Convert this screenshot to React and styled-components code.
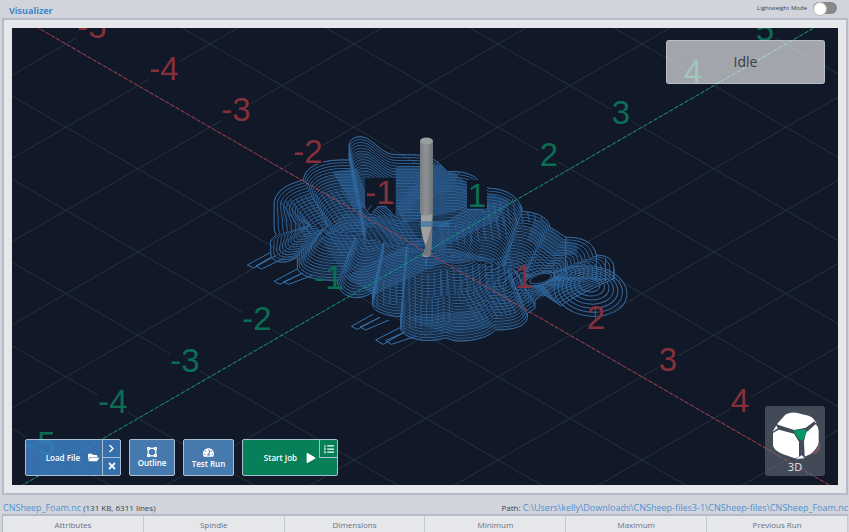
import React from "react";
import styled, { createGlobalStyle } from "styled-components";
import {
  FaFolderOpen,
  FaChevronRight,
  FaTimes,
  FaVectorSquare,
  FaTachometerAlt,
  FaPlay,
  FaListOl,
} from "react-icons/fa";

const GlobalStyle = createGlobalStyle`
  * { box-sizing: border-box; }
  body { margin: 0; background: #d1d5db; font-family: "Open Sans", "Noto Sans", sans-serif; }
  button { font-family: inherit; cursor: pointer; }
`;

const Page = styled.main`
  display: flex;
  flex-direction: column;
  height: 100vh;
  min-height: 400px;
  overflow: hidden;
  background: #d1d5db;
  color: #374151;
`;

const Header = styled.header`
  display: flex;
  align-items: center;
  justify-content: space-between;
  height: 18px;
  flex: none;
  padding: 0 12px 0 9px;
`;

const Title = styled.h1`
  margin: 0;
  padding-top: 4px;
  font-size: 9px;
  line-height: 14px;
  font-weight: 700;
  color: #4287c8;
`;

const ToggleLabel = styled.label`
  display: flex;
  align-items: center;
  gap: 6px;
  font-size: 6px;
  line-height: 12px;
  padding-bottom: 2px;
  color: #374151;
  cursor: pointer;
`;

const Toggle = styled.input`
  appearance: none;
  margin: 0;
  display: flex;
  width: 24px;
  height: 12px;
  border-radius: 6px;
  background: #888888;
  &::before {
    content: "";
    width: 12px;
    height: 12px;
    border-radius: 50%;
    background: #ffffff;
    border: 1px solid #bbbbbb;
  }
  &:checked { justify-content: flex-end; background: #3e85c7; }
`;

const Panel = styled.section`
  display: flex;
  flex: 1;
  min-height: 0;
  margin: 0 1px 0 2px;
  padding: 8px;
  border: 2px solid #b4bac6;
  background: #e5e7eb;
`;

const Viewport = styled.div`
  position: relative;
  flex: 1;
  min-width: 0;
  overflow: hidden;
  background: #111827;
`;

const Scene = styled.svg`
  display: block;
  width: 100%;
  height: 100%;
`;

const Status = styled.div`
  position: absolute;
  top: 12px;
  right: 13px;
  display: flex;
  align-items: center;
  justify-content: center;
  width: 159px;
  height: 44px;
  border: 1px solid rgba(209, 213, 219, 0.5);
  border-radius: 3px;
  background: rgba(255, 255, 255, 0.61);
  font-size: 14px;
  line-height: 18px;
  color: #3a3c44;
`;

const Toolbar = styled.div`
  position: absolute;
  left: 13px;
  bottom: 9px;
  display: flex;
  gap: 8px;
`;

const ButtonGroup = styled.div`
  display: flex;
  width: 96px;
  height: 37px;
  border: 1px solid #a9bdd3;
  border-radius: 2px;
  overflow: hidden;
  background: ${(p) => (p.$tone === "green" ? "#077f59" : "rgba(58, 124, 192, 0.88)")};
`;

const MainAction = styled.button`
  display: flex;
  flex: 1;
  align-items: center;
  justify-content: flex-end;
  gap: ${(p) => (p.$wide ? "9px" : "8px")};
  padding: 0 3px 0 0;
  border: 0;
  background: none;
  color: #ffffff;
  font-size: 8px;
  line-height: 12px;
  font-weight: 600;
  white-space: nowrap;
`;

const SideColumn = styled.div`
  display: flex;
  flex-direction: column;
  width: 18px;
`;

const SideButton = styled.button`
  display: flex;
  align-items: center;
  justify-content: center;
  width: 18px;
  height: 18px;
  padding: 0;
  border: 0 solid #a9bdd3;
  border-left-width: 1px;
  border-bottom-width: ${(p) => (p.$ruled ? "1px" : "0")};
  background: none;
  color: #ffffff;
  stroke-width: 30px;
`;

const StackButton = styled.button`
  display: flex;
  flex-direction: column;
  align-items: center;
  justify-content: center;
  width: ${(p) => (p.$wide ? "51px" : "46px")};
  height: 37px;
  padding: 0;
  border: 1px solid #a9bdd3;
  border-radius: 2px;
  background: rgba(80, 140, 200, 0.85);
  color: #ffffff;
  font-size: 8px;
  line-height: 11px;
  font-weight: 600;
`;

const ViewButton = styled.button`
  position: absolute;
  right: 13px;
  bottom: 9px;
  display: flex;
  flex-direction: column;
  align-items: center;
  width: 60px;
  height: 70px;
  padding: 6px 0 0;
  border: 0;
  border-radius: 3px;
  background: rgba(107, 114, 128, 0.55);
  color: #e5e7eb;
  font-size: 11px;
  line-height: 14px;
`;

const FileInfo = styled.div`
  display: flex;
  align-items: center;
  justify-content: space-between;
  flex: none;
  height: 19px;
  padding: 6px 1px 0 3px;
  font-size: 8px;
  line-height: 12px;
  white-space: nowrap;
  color: #374151;
`;

const FileLink = styled.a`
  font-size: 9px;
  color: #5090d2;
  text-decoration: none;
`;

const StatsClip = styled.div`
  flex: none;
  height: 18px;
  overflow: hidden;
  margin: 0 1px 0 2px;
  border-top: 2px solid #b4bac6;
  border-left: 1px solid #b4bac6;
`;

const Stats = styled.table`
  width: 100%;
  table-layout: fixed;
  border-collapse: separate;
  border-spacing: 0;
  background: #e5e7eb;
  th {
    height: 18px;
    padding: 0;
    border-right: 1px solid #c3c8d1;
    font-size: 8px;
    line-height: 16px;
    font-weight: 400;
    color: #6b7280;
  }
`;

const ORIGIN = { x: 426, y: 252 };
const STEP = { x: 72, y: 41.6 };
const SPAN = 16;
const gridSteps = Array.from({ length: 25 }, (_, i) => i - 12);

function GridLines() {
  return (
    <g stroke="#26333f" strokeWidth="1">
      {gridSteps.map((k) => {
        const dx = k * STEP.x;
        const dy = k * STEP.y;
        const w = SPAN * STEP.x;
        const h = SPAN * STEP.y;
        return (
          <React.Fragment key={k}>
            <line x1={ORIGIN.x + dx - w} y1={ORIGIN.y - dy - h} x2={ORIGIN.x + dx + w} y2={ORIGIN.y - dy + h} />
            <line x1={ORIGIN.x + dx - w} y1={ORIGIN.y + dy + h} x2={ORIGIN.x + dx + w} y2={ORIGIN.y + dy - h} />
          </React.Fragment>
        );
      })}
    </g>
  );
}

const marks = [-5, -4, -3, -2, -1, 1, 2, 3, 4, 5];

function AxisMarks() {
  const labels = marks.flatMap((n) => [
    { n, color: "#85303a", x: ORIGIN.x + n * STEP.x + 26, y: ORIGIN.y + n * STEP.y - 6 },
    {
      n,
      color: "#0c6d55",
      x: ORIGIN.x + n * STEP.x - (n < 0 ? 25 : 21),
      y: ORIGIN.y - n * STEP.y - (n < 0 ? 5 : 3),
    },
  ]);
  return (
    <g fontFamily="'Liberation Sans', Arial, sans-serif" fontSize="33" textAnchor="middle">
      {labels.map(({ n, color, x, y }) => (
        <g key={color + n}>
          {!((n === -1 && color === "#0c6d55") || (n > 0 && n < 3 && color === "#85303a")) && (
            <rect x={x - (n < 0 ? 15 : 10)} y={y - 26} width={n < 0 ? 30 : 20} height="27" fill="#111827" />
          )}
          <text x={x} y={y} fill={color}>{n}</text>
        </g>
      ))}
    </g>
  );
}

/* Outer boundary of the part, drawn at three units per scene unit. */
const OUTLINE =
  "M315 90 L315 45 C320 20 345 15 370 25 C400 45 415 65 440 72 C470 78 510 70 545 78 C580 90 590 105 610 125 C650 122 690 130 705 155 L735 175 C790 175 830 205 836 245 C880 245 915 265 918 292 C935 300 955 315 965 322 C1010 320 1050 335 1057 375 C1090 375 1110 390 1110 415 L1110 445 L985 505 L950 527 L905 497 C890 490 880 500 873 515 L873 535 L850 550 C855 580 830 600 755 600 C730 625 680 635 640 633 C620 632 610 622 600 625 C550 640 490 630 470 600 L470 560 C430 560 390 545 385 525 L385 487 C340 520 280 500 280 450 C230 455 165 440 160 415 L160 380 C120 410 80 395 80 370 L80 345 C75 335 85 325 97 315 C88 300 90 285 90 270 L90 215 C100 175 140 160 178 150 C180 120 215 85 315 90";

const range = (n) => Array.from({ length: n }, (_, i) => i);

function samplePath(d) {
  const tokens = d.match(/[MLC]|-?\d+/g);
  const points = [];
  let i = 0;
  let current = [0, 0];
  while (i < tokens.length) {
    const command = tokens[i++];
    if (command === "C") {
      const [a, b, c, e, x, y] = tokens.slice(i, i + 6).map(Number);
      i += 6;
      range(10).forEach((k) => {
        const t = (k + 1) / 10;
        const u = 1 - t;
        points.push([
          u ** 3 * current[0] + 3 * u * u * t * a + 3 * u * t * t * c + t ** 3 * x,
          u ** 3 * current[1] + 3 * u * u * t * b + 3 * u * t * t * e + t ** 3 * y,
        ]);
      });
      current = [x, y];
    } else {
      const next = [Number(tokens[i]), Number(tokens[i + 1])];
      i += 2;
      const pieces = command === "M" ? 1 : 5;
      const from = current;
      range(pieces).forEach((k) => {
        const t = (k + 1) / pieces;
        points.push([from[0] + (next[0] - from[0]) * t, from[1] + (next[1] - from[1]) * t]);
      });
      current = next;
    }
  }
  return points;
}

/* Every boundary point travels toward this ridge, so lobes keep their shape. */
const RIDGE_START = 200;
const RIDGE_END = 900;
const ridgeY = (x) => 285 + (x - RIDGE_START) * 0.22;
const boundary = samplePath(OUTLINE).map(([x, y]) => {
  const rx = Math.min(RIDGE_END, Math.max(RIDGE_START, 560 + (x - 560) * 0.8));
  const dx = rx - x;
  const dy = ridgeY(rx) - y;
  const length = Math.hypot(dx, dy * 1.5);
  return { x, y, ux: dx / length, uy: dy / length, length };
});

function insetPath(distance, shift) {
  let pen = "M";
  return boundary
    .map((p) => {
      if (distance > p.length) {
        pen = "M";
        return "";
      }
      const segment = `${pen}${(p.x + p.ux * distance).toFixed(1)} ${(p.y + p.uy * distance + shift).toFixed(1)}`;
      pen = "L";
      return segment;
    })
    .join("");
}

const levels = range(32).map((i) => i * 13);

/* Stepped walls show as hatching: x, y, width, height, spacing, slant. */
const HATCHES = [
  { x: 400, y: 455, w: 230, h: 75, gap: 19, slant: 0 },
  { x: 480, y: 520, w: 160, h: 80, gap: 17, slant: 0 },
  { x: 590, y: 285, w: 230, h: 65, gap: 21, slant: 10 },
  { x: 730, y: 220, w: 190, h: 75, gap: 19, slant: 12 },
  { x: 110, y: 215, w: 230, h: 110, gap: 15, slant: 80 },
  { x: 240, y: 290, w: 240, h: 90, gap: 15, slant: 60 },
  { x: 590, y: 420, w: 240, h: 80, gap: 19, slant: 6 },
  { x: 650, y: 480, w: 130, h: 95, gap: 14, slant: 55 },
  { x: 500, y: 170, w: 60, h: 90, gap: 11, slant: -50 },
  { x: 540, y: 110, w: 150, h: 110, gap: 11, slant: -60 },
];

const SLOTS = [
  "M80 367 L10 405 L28 414 L95 377",
  "M80 382 L36 408 L52 417 L120 385",
  "M160 417 L90 454 L108 463 L176 429",
  "M176 429 L118 456 L134 463 L205 436",
  "M388 552 L322 589 L340 598 L408 562",
  "M408 562 L348 591 L365 600 L435 570",
  "M470 592 L395 630 L417 643 L482 606",
  "M482 606 L425 632 L442 643 L512 620",
];

function Toolpath() {
  return (
    <g transform="translate(244 130) scale(0.33333)" fill="none" stroke="#32699f" strokeWidth="3">
      <clipPath id="partArea"><path d={OUTLINE} /></clipPath>
      <g stroke="#3672ad">
        {SLOTS.map((d) => <path key={d} d={d} />)}
      </g>
      <g clipPath="url(#partArea)" stroke="none" fill="#265483">
        <path opacity="0.7" d="M265 125 L340 115 L365 190 L365 235 L330 235 Z" />
        <path opacity="0.65" d="M455 110 L600 105 L670 160 L675 235 L480 280 L455 230 Z" />
        <path opacity="0.6" d="M300 440 L520 330 L735 190 L800 210 L760 270 L600 350 L760 390 L590 400 L390 495 Z" />
        <path opacity="0.5" d="M870 270 H900 L960 330 L1000 340 V375 H920 L850 330 Z" />
        <path opacity="0.4" d="M480 560 L700 540 L760 590 L600 610 Z" />
        <path opacity="0.35" d="M300 250 L480 270 L540 360 L300 430 L230 330 Z" />
      </g>
      <g clipPath="url(#partArea)">
        {levels.map((d) => <path key={d} d={insetPath(d, 0)} opacity="0.95" />)}
        {levels.slice(3).map((d) => <path key={d} d={insetPath(d, 22)} opacity="0.55" strokeWidth="2" />)}
        {HATCHES.map((hatch) =>
          range(Math.floor(hatch.w / hatch.gap)).map((i) => (
            <path
              key={hatch.x + "-" + hatch.y + "-" + i}
              d={`M${hatch.x + i * hatch.gap} ${hatch.y - i * 3} l${hatch.slant} ${hatch.h}`}
              stroke="#2c5d90"
              strokeWidth="4"
              opacity="0.7"
            />
          ))
        )}
      </g>
      <path d={OUTLINE + "Z"} />
      {range(7).map((i) => (
        <ellipse key={i} cx={1042 - i} cy={483 - i * 3} rx={110 - i * 13} ry={75 - i * 9} transform="rotate(8 1040 465)" />
      ))}
      <ellipse cx="888" cy="447" rx="46" ry="17" fill="#111827" transform="rotate(-16 888 447)" />
      {range(9).map((i) => (
        <ellipse
          key={i}
          cx={890 - i * 10}
          cy={447 - i * 2}
          rx={34 + i * 17}
          ry={13 + i * 8}
          transform="rotate(-16 885 447)"
          opacity={0.9 - i * 0.06}
        />
      ))}
      <path d="M965 320 V430 M1057 375 V450 M1110 415 V455 M1085 385 V450 M1054 566 V535 H1070" />
      <g stroke="none" fill="#111827">
        <path d="M365 143 H455 V262 L425 228 H402 L380 252 L365 236 Z" />
        <path d="M671 150 H729 V235 H671 Z" />
      </g>
      <path d="M370 241 L390 218 H408 M385 247 L403 230 H425 L455 262 M671 239 H718 V250 M690 230 H735" />
    </g>
  );
}

function Tool() {
  return (
    <g>
      <defs>
        <linearGradient id="steel" x1="0" x2="1">
          <stop offset="0" stopColor="#777b80" />
          <stop offset="0.45" stopColor="#8f9397" />
          <stop offset="1" stopColor="#6f7478" />
        </linearGradient>
      </defs>
      <path d="M420 141 H433 V215 L432 239 L431 255 Q427 259 422 256 L426 246 Q421 239 421 215 L420 212 Z" fill="url(#steel)" />
      <ellipse cx="426.5" cy="141" rx="6.5" ry="3.5" fill="#999da0" />
      <path d="M421 215 Q427 217 432 214 L431 230 L426 245 Q422 238 421 227 Z" fill="#a0a09e" />
      <path d="M432 224 Q429 237 423 254 Q427 258 431 254 Z" fill="#777a7c" />
      <rect x="420" y="221" width="29" height="6" fill="#336da3" opacity="0.65" />
      <path d="M426 247 V251 M426 260 V266" stroke="#377ab7" />
    </g>
  );
}

function CubeIcon() {
  return (
    <svg width="48" height="48" viewBox="0 0 144 144" aria-hidden="true">
      <g fill="#ffffff" stroke="#ffffff" strokeWidth="4" strokeLinejoin="round">
        <path d="M21 36 L45 9 Q58 2 75 4 L112 13 Q124 17 129 26 L104 45 L70 52 Z" />
        <path d="M8 64 L24 55 L68 67 L82 90 L82 133 L72 137 L35 124 Q8 112 8 100 Z" />
        <path d="M101 88 L107 63 L134 39 Q141 46 141 56 L141 92 Q136 110 118 124 L103 131 Z" />
      </g>
      <g fill="#ffffff" stroke="#ffffff" strokeLinejoin="round">
        <path d="M16 41 L20 49 L6 58 Z M130 28 L136 31 L134 33 Z M92 130 L100 138 L76 141 Z" />
      </g>
      <path d="M72 54 Q88 56 102 52 Q107 53 105 62 L96 82 Q91 88 86 82 L70 61 Q67 55 72 54 Z" fill="#079867" stroke="#079867" strokeWidth="2" />
    </svg>
  );
}

const columns = ["Attributes", "Spindle", "Dimensions", "Minimum", "Maximum", "Previous Run"];

export default function App() {
  return (
    <>
      <GlobalStyle />
      <Page>
        <Header>
          <Title>Visualizer</Title>
          <ToggleLabel htmlFor="lightweight">
            Lightweight Mode
            <Toggle id="lightweight" type="checkbox" role="switch" />
          </ToggleLabel>
        </Header>
        <Panel>
          <Viewport>
            <Scene viewBox="12 28 826 457" preserveAspectRatio="xMidYMid slice" role="img" aria-label="Toolpath preview">
              <GridLines />
              <Toolpath />
              <AxisMarks />
              <g strokeWidth="1" strokeDasharray="4 2">
                <line x1="-6" y1="2.4" x2="858" y2="501.6" stroke="#b53a44" />
                <line x1="-6" y1="501.6" x2="858" y2="2.4" stroke="#109a74" />
              </g>
              <Tool />
            </Scene>
            <Status role="status">Idle</Status>
            <Toolbar>
              <ButtonGroup>
                <MainAction>
                  Load File
                  <FaFolderOpen size={11} />
                </MainAction>
                <SideColumn>
                  <SideButton $ruled aria-label="Recent files"><FaChevronRight size={9} /></SideButton>
                  <SideButton aria-label="Close file"><FaTimes size={10} /></SideButton>
                </SideColumn>
              </ButtonGroup>
              <StackButton>
                <FaVectorSquare size={10} />
                Outline
              </StackButton>
              <StackButton $wide>
                <FaTachometerAlt size={11} />
                Test Run
              </StackButton>
              <ButtonGroup $tone="green">
                <MainAction $wide>
                  Start Job
                  <FaPlay size={10} />
                </MainAction>
                <SideColumn>
                  <SideButton $ruled aria-label="Start from line"><FaListOl size={10} /></SideButton>
                </SideColumn>
              </ButtonGroup>
            </Toolbar>
            <ViewButton>
              <CubeIcon />
              3D
            </ViewButton>
          </Viewport>
        </Panel>
        <FileInfo>
          <span><FileLink href="#file">CNSheep_Foam.nc</FileLink> (131 KB, 6311 lines)</span>
          <span>Path: <FileLink href="#path">C:\Users\kelly\Downloads\CNSheep-files3-1\CNSheep-files\CNSheep_Foam.nc</FileLink></span>
        </FileInfo>
        <StatsClip>
          <Stats>
            <thead>
              <tr>{columns.map((c) => <th key={c} scope="col">{c}</th>)}</tr>
            </thead>
          </Stats>
        </StatsClip>
      </Page>
    </>
  );
}
